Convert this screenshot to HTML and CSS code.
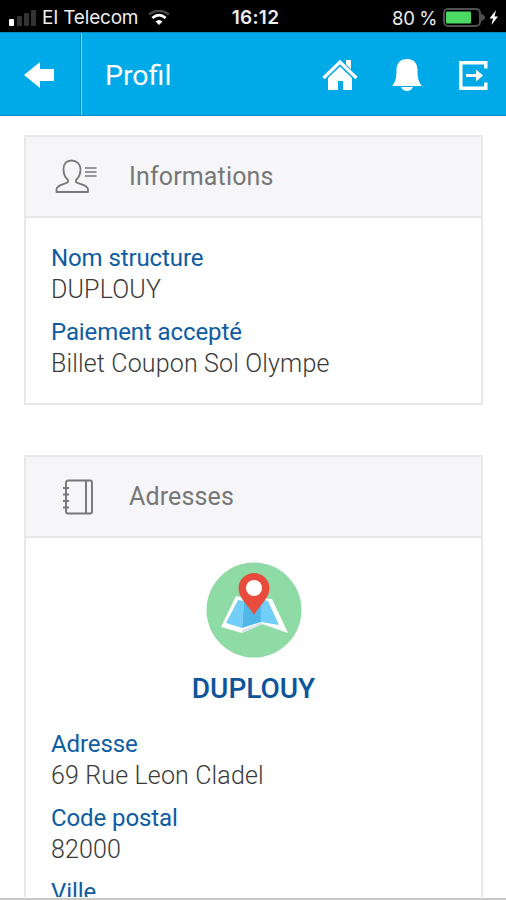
FILE: index.html
```html
<!DOCTYPE html>
<html lang="fr">
<head>
  <meta charset="UTF-8">
  <title>Profil</title>
  <meta name="viewport" content="width=device-width, initial-scale=1.0">
  <link rel="stylesheet" href="styles.css">
</head>
<body>

  <div class="status-bar">
    <div class="status-left">
      <svg class="signal" width="28" height="18" viewBox="0 0 28 18">
        <rect x="0" y="10" width="5" height="7" rx="1" fill="#fff"/>
        <rect x="8" y="7" width="5" height="10" rx="1" fill="#333"/>
        <rect x="15" y="4" width="5" height="13" rx="1" fill="#333"/>
        <rect x="22" y="1" width="5" height="16" rx="1" fill="#333"/>
      </svg>
      <span class="carrier">EI Telecom</span>
      <svg class="wifi" width="22" height="16" viewBox="0 0 22 16">
        <path d="M1 4.5Q11-3 21 4.500" fill="none" stroke="#484848" stroke-width="2.4"/>
        <path d="M4.3 8Q11 2.200 17.7 8" fill="none" stroke="#fff" stroke-width="2.7"/>
        <path d="M7.500 11.500Q11 8.500 14.500 11.500L11 15z" fill="#fff"/>
      </svg>
    </div>
    <span class="clock">16:12</span>
    <div class="status-right">
      <span class="percent">80 %</span>
      <svg class="battery" width="56" height="20" viewBox="0 0 56 20">
        <rect x="1" y="1" width="36" height="17" rx="4" fill="none" stroke="#505050" stroke-width="2"/>
        <rect x="3" y="3.5" width="25" height="12" rx="1" fill="#4cd964"/>
        <path d="M38 6Q42 7 42 9.5T38 13z" fill="#505050"/>
        <path d="M53 2L46.500 10.500H50L48.500 17L55 8.500H51.500z" fill="#fff"/>
      </svg>
    </div>
  </div>

  <header class="navbar">
    <a class="back-btn" href="#" aria-label="Retour">
      <svg width="30" height="26" viewBox="0 0 30 26">
        <path d="M0 13L16 0V7H30V19H16V26z" fill="#fff"/>
      </svg>
    </a>
    <h1>Profil</h1>
    <nav class="nav-icons">
      <a href="#" aria-label="Accueil">
        <svg width="36" height="32" viewBox="0 0 36 32">
          <path d="M24 1H29V11L24 6z" fill="#fff"/>
          <path d="M6 19L18 7.500L30 19V31H21V22H16V31H6z" fill="#fff"/>
          <path d="M1.500 19L18 3L34.500 19" fill="none" stroke="#00a9e8" stroke-width="5"/>
          <path d="M1.500 19L18 3L34.500 19" fill="none" stroke="#fff" stroke-width="3.200"/>
        </svg>
      </a>
      <a href="#" aria-label="Notifications">
        <svg width="30" height="32" viewBox="0 0 30 32">
          <path d="M15 0C8 0 4.500 4.500 4.500 11C4.500 19 3.500 23 0 27H30C26.500 23 25.500 19 25.500 11C25.500 4.500 22 0 15 0z" fill="#fff"/>
          <path d="M9 28H21Q19 32 15 32T9 28z" fill="#fff"/>
        </svg>
      </a>
      <a class="logout" href="#" aria-label="Déconnexion">
        <svg width="29" height="29" viewBox="0 0 29 29">
          <path d="M26.800 7.500V1.800H1.800V27.200H26.800V21.500" fill="none" stroke="#fff" stroke-width="3.400"/>
          <path d="M7 13H17V8.500L24 14.500L17 20.500V16H7z" fill="#fff"/>
        </svg>
      </a>
    </nav>
  </header>

  <main class="content">
    <section class="card">
      <div class="card-header">
        <svg class="card-icon" width="44" height="36" viewBox="0 0 44 36">
          <path d="M16.500 1.500C11.500 1.500 8.500 5 8.500 10C8.500 16 10 18.500 13 21V23C10 25.500 1.500 26 1.500 30.500V33H33V30.500C33 26 24 25.500 21 23V21C24 18.500 25.500 16 25.500 10C25.500 5 21.500 1.500 16.500 1.500z" fill="none" stroke="#777" stroke-width="1.800" stroke-linejoin="round"/>
          <path d="M30 9H41.500M30 13H41.500M30 17H41.500" stroke="#777" stroke-width="1.700"/>
        </svg>
        <h2>Informations</h2>
      </div>
      <dl class="card-body">
        <dt>Nom structure</dt>
        <dd>DUPLOUY</dd>
        <dt>Paiement accepté</dt>
        <dd>Billet Coupon Sol Olympe</dd>
      </dl>
    </section>

    <section class="card">
      <div class="card-header">
        <svg class="card-icon" width="44" height="36" viewBox="0 0 44 36">
          <rect x="11" y="1.500" width="26" height="33" rx="2" fill="none" stroke="#777" stroke-width="1.900"/>
          <path d="M31 1.500V34.500M8 9H14M8 15.500H14M8 22H14M8 28.500H14" stroke="#777" stroke-width="1.900"/>
        </svg>
        <h2>Adresses</h2>
      </div>
      <div class="place">
        <svg width="96" height="96" viewBox="0 0 96 96">
          <circle cx="48" cy="48" r="47.500" fill="#8edba5"/>
          <path d="M30 34L38 36L56 36L66 37L82 71L56 62L36 71L15 65z" fill="#fff"/>
          <path d="M32 38L38 39L36 66L20 61z" fill="#73cef8"/>
          <path d="M38 39L55 37V60L36 66z" fill="#50b8e8"/>
          <path d="M55 37L62 39L73 63L55 60z" fill="#73cef8"/>
          <path d="M36 68L56 60V62.500L36 71z" fill="#dce2ea"/>
          <path d="M48 53C43 44 32.500 36 32.500 26.500A15.500 15.500 0 0 1 63.500 26.500C63.500 36 53 44 48 53z" fill="#e94b3c"/>
          <circle cx="48" cy="26" r="8" fill="#fff"/>
        </svg>
        <h3>DUPLOUY</h3>
      </div>
      <dl class="card-body address">
        <dt>Adresse</dt>
        <dd>69 Rue Leon Cladel</dd>
        <dt>Code postal</dt>
        <dd>82000</dd>
        <dt>Ville</dt>
      </dl>
    </section>
  </main>

</body>
</html>
```
FILE: styles.css
```css
* {
  box-sizing: border-box;
}

body {
  margin: 0;
  height: 900px;
  display: flex;
  flex-direction: column;
  overflow: hidden;
  background: #fff;
  border-bottom: 2px solid #c9c9c9;
  font-family: Roboto, sans-serif;
}

h1, h2, h3, dl, dd {
  margin: 0;
}

svg {
  display: block;
}

.status-bar {
  flex: none;
  height: 32px;
  padding: 3px 7px 0 9px;
  display: grid;
  grid-template-columns: 1fr auto 1fr;
  align-items: center;
  background: #000;
  color: #eee;
  font: 19px Inter, sans-serif;
}

.status-left, .status-right {
  display: flex;
  align-items: center;
}

.status-right {
  justify-content: flex-end;
  gap: 6px;
}

.carrier {
  margin: 0 10px 0 5px;
  letter-spacing: -0.2px;
}

.clock {
  padding-left: 3px;
  font-weight: 600;
  letter-spacing: 0.3px;
}

.percent {
  font-size: 18.5px;
  letter-spacing: -0.4px;
}

.navbar {
  flex: none;
  height: 84px;
  padding-top: 2px;
  display: flex;
  align-items: center;
  background: #00a9e8;
  border-top: 1px solid #0789bd;
  border-bottom: 1px solid #0789bd;
  color: #fff;
}

.back-btn {
  width: 82px;
  height: 82px;
  margin-top: -2px;
  padding: 2px 0 0 24px;
  display: flex;
  align-items: center;
  border-right: 1px solid #7fd3f4;
  box-shadow: inset -1px 0 #078fc5;
}

.navbar h1 {
  margin-left: 23px;
  font-size: 28.5px;
  font-weight: 400;
}

.nav-icons {
  margin-left: auto;
  padding-right: 18px;
  display: flex;
  align-items: center;
  gap: 34px;
}

.logout {
  margin-left: 3px;
}

.content {
  flex: 1;
  min-height: 0;
  margin-bottom: 1px;
  padding: 19px 23px 0 24px;
  overflow: hidden;
}

.card {
  margin-bottom: 50px;
  border: 2px solid #e8e8e8;
}

.card-header {
  height: 81px;
  padding-left: 29px;
  display: flex;
  align-items: center;
  gap: 30px;
  background: #f6f6f8;
  border-bottom: 2px solid #e8e8e8;
}

.card-header h2 {
  color: #777;
  font-size: 25px;
  font-weight: 400;
  letter-spacing: 0.15px;
}

.card-body {
  padding: 25px 25px 12px;
  font-size: 24px;
  line-height: 31px;
}

.card-body dt {
  color: #0d5ca3;
  letter-spacing: -0.1px;
}

.card-body dd {
  margin-bottom: 12px;
  color: #3a3a3a;
  font-size: 25px;
  font-weight: 300;
  letter-spacing: 0.15px;
}

.place {
  padding: 24px 0 0;
  display: flex;
  flex-direction: column;
  align-items: center;
}

.place h3 {
  margin-top: 14px;
  color: #0d549b;
  font-size: 28px;
  font-weight: 500;
  line-height: 34px;
}

.address {
  padding-top: 23px;
}
```
